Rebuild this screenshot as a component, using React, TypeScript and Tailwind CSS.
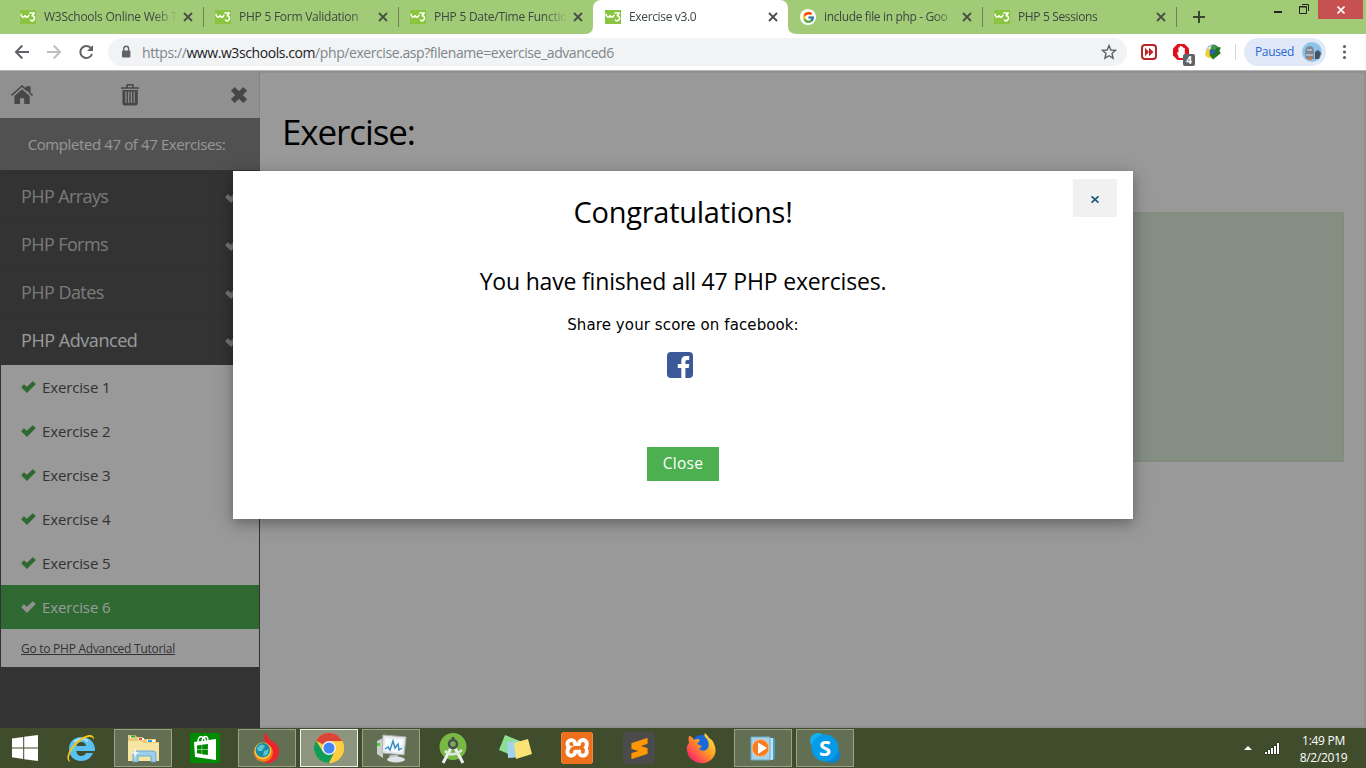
import React from "react";
import { FcGoogle } from "react-icons/fc";
import { SiSublimetext, SiXampp } from "react-icons/si";

const W3Icon = () => (
  <svg width="16" height="16" viewBox="0 0 16 16" className="shrink-0">
    <rect y="1" width="16" height="14" fill="#8ac53f" />
    <path d="M1 5.4 Q1.8 8.2 3.4 8.2 Q4.9 8.1 5 6.2 Q5.6 8.2 7 8.1 Q8.4 8 8.8 6.4" fill="none" stroke="#fff" strokeWidth="1.6" strokeLinecap="round" />
    <path d="M10 4 H14.3 L12.2 6.7 Q14.9 7.2 14.4 9.8 Q13.6 12.2 11.4 11.8 L10.5 11" fill="none" stroke="#fff" strokeWidth="1.6" strokeLinecap="round" strokeLinejoin="round" />
  </svg>
);

const CloseX = () => (
  <svg width="10" height="10" viewBox="0 0 10 10" className="shrink-0">
    <path d="M1 1 L9 9 M9 1 L1 9" stroke="#475044" strokeWidth="1.8" />
  </svg>
);

type TabProps = { title: string; spacing: string; google?: boolean; active?: boolean; line?: boolean; narrow?: boolean };

const Tab = ({ title, spacing, google, active, line, narrow }: TabProps) => (
  <div className={`relative flex h-[34px] shrink-0 items-center pl-3 ${narrow ? "w-[194px]" : "w-[195px]"} ${active ? "rounded-t-[8px] bg-white" : ""}`}>
    {active && (
      <svg className="absolute -left-2 bottom-0" width="212" height="8" viewBox="0 0 212 8">
        <path d="M0 8 Q8 8 8 0 V8 Z M212 8 Q203 8 203 0 V8 Z" fill="#fff" />
      </svg>
    )}
    {google ? (
      <span className="flex size-4 shrink-0 items-center justify-center rounded-full bg-white"><FcGoogle size={13} /></span>
    ) : (
      <W3Icon />
    )}
    <span className={`ml-2 w-[132px] shrink-0 text-[12px] leading-4 whitespace-nowrap text-[#3c4840] [mask-image:linear-gradient(to_right,black_110px,transparent_134px)] ${spacing}`}>{title}</span>
    <span className={`flex ${narrow ? "ml-[6px]" : "ml-[7px]"}`}><CloseX /></span>
    {line && <span className="absolute top-[7px] right-[-1px] h-5 w-px bg-[#6b8155]" />}
  </div>
);

const Check = ({ className }: { className: string }) => (
  <svg width="15" height="12" viewBox="0 0 15 12" className={`shrink-0 ${className}`}>
    <path d="M0.2 6.2 L2.9 3.3 L5.8 5.8 L11.9 0.2 L14.8 3 L6 11.9 Z" fill="currentColor" />
  </svg>
);

const sections = [
  { name: "PHP Arrays", cls: "text-[#ccc] tracking-[-0.6px]" },
  { name: "PHP Forms", cls: "text-[#ccc] tracking-[-0.6px]" },
  { name: "PHP Dates", cls: "text-[#ccc] tracking-[-0.55px]" },
  { name: "PHP Advanced", cls: "text-white tracking-[-0.45px]" },
];

const Sidebar = () => (
  <aside className="flex w-[260px] shrink-0 flex-col bg-[#555]">
    <div className="flex h-[47px] items-center justify-between border-r border-[#ddd] bg-[#f1f1f1] pr-[11px] pl-[11px] text-[#777]">
      <svg width="22" height="20" viewBox="0 0 22 20">
        <path d="M0.5 10.5 L11 1 L15.5 5 V2 H18.8 V8 L21.5 10.5" fill="none" stroke="currentColor" strokeWidth="1.6" />
        <path d="M16 2 H18.8 V8 L16 5.5 Z M11 4.2 L18.7 11 V19 H13.2 V13.2 H9 V19 H3.4 V11 Z" fill="currentColor" />
      </svg>
      <svg width="18" height="22" viewBox="0 0 18 22" className="mr-[3px]">
        <path d="M6 3.3 V1.5 Q6 .7 6.8 .7 H11.2 Q12 .7 12 1.5 V3.3 M0 4 H18" fill="none" stroke="currentColor" strokeWidth="1.6" />
        <path fillRule="evenodd" d="M1.4 6 H16.8 V19.3 Q16.8 21.5 14.6 21.5 H3.6 Q1.4 21.5 1.4 19.3 Z M4.4 7.5 V19 H5.6 V7.5 Z M7.1 7.5 V19 H8.3 V7.5 Z M9.8 7.5 V19 H11 V7.5 Z M12.6 7.5 V19 H13.8 V7.5 Z" fill="currentColor" />
      </svg>
      <svg width="18" height="18" viewBox="0 0 18 18">
        <path d="M2.8 2.8 L15.2 15.2 M15.2 2.8 L2.8 15.2" stroke="currentColor" strokeWidth="5.4" />
      </svg>
    </div>
    <div className="flex h-[52px] items-center justify-center bg-[#888] pr-[7px] text-[15px] tracking-[-0.39px] text-[#f8f8f8]">Completed 47 of 47 Exercises:</div>
    <div className="flex flex-col border-x border-[#555] pt-0.5">
      {sections.map((s) => (
        <div key={s.name} className={`flex h-12 items-center justify-between border-t border-[#4f4f4f] pr-[19px] pl-5 text-[18px] ${s.cls}`}>
          {s.name}
          <Check className="text-[#c4c4c4]" />
        </div>
      ))}
      <div className="mt-px flex flex-col bg-white text-[#555]">
        {[1, 2, 3, 4, 5, 6].map((n) => (
          <div key={n} className={`flex h-11 items-center gap-[6px] pl-5 text-[15px] tracking-[-0.14px] ${n === 6 ? "bg-[#4caf50] text-white" : "text-[#555]"}`}>
            <Check className={n === 6 ? "text-[#f1f1f1]" : "text-[#4caf50]"} />
            Exercise {n}
          </div>
        ))}
        <div className="flex h-[38px] items-center pt-0.5 pl-5 text-[12px] tracking-[-0.26px] underline">Go to PHP Advanced Tutorial</div>
      </div>
    </div>
  </aside>
);

const Modal = () => (
  <div className="absolute inset-0 flex items-start justify-center bg-black/40 pt-[100px]">
    <div className="relative flex h-[348px] w-[900px] flex-col items-center bg-white text-black shadow-[0_4px_10px_0_rgba(0,0,0,0.2),0_4px_20px_0_rgba(0,0,0,0.19)]">
      <button className="absolute top-2 right-4 flex h-[38px] w-11 items-center justify-center bg-[#f1f1f1] pt-[3px]">
        <svg width="8" height="7" viewBox="0 0 8 7"><path d="M.5 .3 L7.5 6.7 M7.5 .3 L.5 6.7" stroke="#17577c" strokeWidth="1.6" /></svg>
      </button>
      <h2 className="mt-[18px] h-[45px] text-[29px] leading-[45px] tracking-[-0.25px]">Congratulations!</h2>
      <h3 className="mt-[29px] h-9 text-[23px] leading-9 tracking-[-0.18px]">You have finished all 47 PHP exercises.</h3>
      <p className="mt-[15px] h-[23px] font-['DejaVu_Sans',sans-serif] text-[15px] leading-[23px] tracking-[0.1px]">Share your score on facebook:</p>
      <svg width="26" height="26" viewBox="0 0 26 26" className="mt-[15px] mr-[6px]">
        <rect width="26" height="26" rx="4" fill="#3b5998" />
        <path d="M14.3 26 V16 H10.8 V12 H14.3 V9 Q14.3 4 19 4 H22.2 V8 H20 Q18.4 8 18.4 9.6 V12 H22.3 L21.7 16 H18.4 V26 Z" fill="#fff" />
      </svg>
      <button className="mt-[69px] flex h-[34px] w-[72px] items-center justify-center bg-[#4caf50] text-[15.5px] tracking-[0.25px] text-white">Close</button>
    </div>
  </div>
);

const Toolbar = () => (
  <div className="flex h-9 items-center bg-white">
    <svg width="108" height="36" viewBox="0 0 108 36" fill="none" strokeWidth="2">
      <path d="M29 18 H16 M22.3 11.5 L16 18 L22.3 24.5" stroke="#5f6368" />
      <path d="M47 18 H60 M53.7 11.5 L60 18 L53.7 24.5" stroke="#bcbec0" />
      <path d="M91.2 14.5 A6 6 0 1 0 92 20" stroke="#5f6368" />
      <path d="M93 11 V17 H87 Z" fill="#5f6368" />
    </svg>
    <div className="flex h-7 w-[1019px] items-center rounded-full bg-[#f1f3f4] pr-2.5 pl-3">
      <svg width="12" height="14" viewBox="0 0 12 14"><rect x="2" y="5.5" width="8.4" height="7" rx="1" fill="#5f6368" /><path d="M3.8 6 V3.6 A2.4 2.4 0 0 1 8.6 3.6 V6" fill="none" stroke="#5f6368" strokeWidth="1.4" /></svg>
      <span className="ml-2.5 flex-1 text-[14px] tracking-[-0.42px] text-[#80868b]">https://<span className="text-[#202124]">www.w3schools.com</span>/php/exercise.asp?filename=exercise_advanced6</span>
      <svg width="16" height="16" viewBox="0 0 16 16"><path d="M8 1.6 L9.8 6 L14.6 6.4 L11 9.5 L12.1 14.2 L8 11.7 L3.9 14.2 L5 9.5 L1.4 6.4 L6.2 6 Z" fill="none" stroke="#5f6368" strokeWidth="1.4" /></svg>
    </div>
    <svg width="117" height="36" viewBox="1127 0 117 36">
      <rect x="1142" y="11" width="14" height="14" rx="3" fill="#fff" stroke="#b92327" strokeWidth="2" />
      <path d="M1145 13.8 L1149 18 L1145 22.2 Z M1149 13.8 L1153.5 18 L1149 22.2 Z" fill="#b92327" />
      <path d="M1177.5 10 H1184.5 L1189 14.5 V21.5 L1184.5 26 H1177.5 L1173 21.5 V14.5 Z" fill="#e0101c" />
      <path d="M1179 24 L1176.8 18.5 L1178.4 18.5 V13.5 H1179.8 V12 H1181.6 V12.8 H1183.2 V14 H1184.8 V21 L1183 24 Z" fill="#fff" />
      <rect x="1183" y="20" width="12" height="12" rx="2" fill="#5f6368" />
      <text x="1189" y="30" textAnchor="middle" fontSize="10" fontWeight="700" fill="#fff">4</text>
      <circle cx="1213" cy="17" r="6.5" fill="#2a5fae" />
      <path d="M1207 15 Q1209 11 1213 11 L1211 15 L1207 18 Z" fill="#d5e4f0" />
      <path d="M1211 12 Q1215 10 1218 13 L1215 16 L1211 15 Z" fill="#3c9c35" />
      <path d="M1205 20 Q1206 15 1211 14 Q1208 18 1211 21 L1214 24 Q1206 25 1205 20 Z" fill="#f0cf2e" />
      <path d="M1217 13 L1221 13.5 L1219 17 L1221 19 L1213 25.5 L1209 20 L1213 20.5 L1215 18 Z" fill="#23761f" />
      <path d="M1235.5 10 V26" stroke="#d3d6da" />
    </svg>
    <div className="flex h-7 w-[82px] items-center justify-between rounded-full bg-[#e1e9f8] pr-1 pl-[11px] text-[12px] tracking-[-0.35px] text-[#2668d0]">
      Paused
      <svg width="20" height="20" viewBox="0 0 20 20"><circle cx="10" cy="10" r="10" fill="#8cc4ec" /><path d="M3 11 Q3 4 8 4 Q12 4 12 10 V17 H4 Z" fill="#7d8795" /><path d="M5 8 H10 M4 13 H11" stroke="#c2c8cf" strokeWidth="1.4" /><path d="M6 15 H10 V18 H6 Z" fill="#c97b4e" /><path d="M13 10 L16 8 L19 11 L17 17 H13 Z" fill="#46525f" /></svg>
    </div>
    <svg width="36" height="36" viewBox="0 0 36 36" fill="#5f6368"><circle cx="18.5" cy="12.5" r="1.6" /><circle cx="18.5" cy="18" r="1.6" /><circle cx="18.5" cy="23.5" r="1.6" /></svg>
  </div>
);

const IEIcon = () => (
  <svg width="32" height="32" viewBox="0 0 32 32">
    <path fillRule="evenodd" d="M16 5 C9 5 4 10 4 17 C4 24 9 29 16 29 C22 29 26 26 28 21 H21 C20 23 18.5 24 16.3 24 C13.5 24 11.5 22 11.3 19 H30 C30.5 11 25 5 16 5 Z M11.5 14 C12 11.5 13.8 10 16.3 10 C19 10 20.7 11.5 21 14 Z" fill="#5bc0f2" />
    <path d="M9 10 Q15 4 23 9" stroke="#b8eaff" strokeWidth="1.5" fill="none" />
    <path d="M29 8 C30 0 20 2 11 10 C3 18 -1 29 6 30 C2 28 4 20 12 12 C20 4 28 3 29 8 Z" fill="#f6c51c" />
  </svg>
);
const ExplorerIcon = () => (
  <svg width="34" height="32" viewBox="0 0 34 32">
    <path d="M2 3 H9 L11 5 H16 L18 7 H30 V10 H33 V29 H2 Z" fill="#e9ca78" />
    <path d="M4 4 H9 V6 H4 Z" fill="#fff" /><rect x="5" y="3.5" width="4" height="2" fill="#29a83c" />
    <path d="M12 6 H18 V8 H12 Z M21 8 H29 V10 H21 Z" fill="#fff" /><rect x="13" y="6" width="3" height="2" fill="#e44" /><rect x="22" y="8" width="4" height="2" fill="#28a4d8" />
    <path d="M2 9 H15 L18 11 H33 V29 H2 Z" fill="#f7e5a4" />
    <path d="M7 30 V22 Q7 19 10 19 H27 Q30 19 30 22 V30 H25 V24 H12 V30 Z" fill="#9bcfec" stroke="#5d9fc9" strokeWidth=".8" />
    <path d="M9 15 L10 20 L14 21 L10 22 L9 27 L8 22 L5 21 L8 20 Z" fill="#fff" opacity=".85" />
  </svg>
);
const WinPane = ({ color }: { color: string }) => (
  <path d="M0 3.6 L11.2 2 V12.4 H0 Z M12.2 1.8 L26 0 V12.4 H12.2 Z M0 13.4 H11.2 V24 L0 22.2 Z M12.2 13.4 H26 V26 L12.2 24.2 Z" fill={color} />
);
const StoreIcon = () => (
  <svg width="30" height="30" viewBox="0 0 30 30"><rect width="30" height="30" fill="#008a00" /><path d="M4 9 L26 6 V27 L5 24 Z" fill="#fff" /><path d="M8 9 Q8 3 12 4 Q16 5 15 9 M12 8 Q13 2 17 4 Q18 5 18 8" fill="none" stroke="#fff" strokeWidth="1.5" /><g transform="translate(7 11) scale(.42)"><WinPane color="#008a00" /></g></svg>
);
const TorchIcon = () => (
  <svg width="28" height="34" viewBox="0 0 28 34"><path d="M13 1 Q9 6 13 11 L18 18 L8 29 Q12 33 17 32 Q26 29 26 20 Q26 14 19 10 Q13 6 13 1 Z" fill="#ed242c" /><circle cx="10.5" cy="21.5" r="9.5" fill="#ee7d1b" /><circle cx="9.8" cy="20" r="8.5" fill="#ffc33a" /><circle cx="9.8" cy="19.2" r="7.2" fill="#1788a5" /><path d="M4 17 Q8 11 12 15 L9 20 L5 20 Z M11 20 L16 18 L14 24 L10 25 Z" fill="#59c5cd" /></svg>
);
const ChromeIcon = () => (
  <svg width="30" height="30" viewBox="0 0 30 30"><circle cx="15" cy="15" r="15" fill="#fc4" /><path d="M15 15 L2 7.5 A15 15 0 0 1 28 7.5 L27.9 8.2 H15 Z" fill="#db4437" /><path d="M2 7.5 A15 15 0 0 0 15 30 L21 18.5 L15 15 L8.5 18 Z" fill="#0f9d58" /><path d="M15 8.2 H28.4 A15 15 0 0 1 15 30 L21 18.4 Z" fill="#ffcd42" /><circle cx="15" cy="15" r="7" fill="#f1f1f1" /><circle cx="15" cy="15" r="5.5" fill="#4285f4" /></svg>
);
const MonitorIcon = () => (
  <svg width="32" height="30" viewBox="0 0 32 30"><path d="M2 8 L8 5 V25 L2 21 Z" fill="#ccd0cd" /><path d="M2 10 H5 V13 H2 Z" fill="#47d32f" /><path d="M8 2 L31 4 L29 22 L7 20 Z" fill="#e6e8e9" stroke="#aab0b2" /><path d="M10 5 L28 6.5 L26.5 19.5 L9.5 18 Z" fill="#f5fbff" /><path d="M10 16 L13 14 L15 17 L18 8 L20 15 L23 11 L24 17 L27 15" fill="none" stroke="#378fc3" strokeWidth="1.5" /><path d="M15 22 H23 L24 26 H13 Z" fill="#b9bfc2" /><ellipse cx="21" cy="26.5" rx="9" ry="3" fill="#dfe2e3" /></svg>
);
const StudioIcon = () => (
  <svg width="28" height="32" viewBox="0 0 28 32"><circle cx="14" cy="14.5" r="13.5" fill="#78b943" /><path d="M12 16 L4 31 M16 16 L24 31" stroke="#eceff0" strokeWidth="3" /><path d="M6 19 Q13 26 23 18" fill="none" stroke="#e2e6e5" strokeWidth="2.5" /><circle cx="14" cy="12" r="4" fill="#7fa958" stroke="#47524c" strokeWidth="2.6" /><path d="M14 5 V9" stroke="#47524c" strokeWidth="3" /></svg>
);
const NotesIcon = () => (
  <svg width="34" height="28" viewBox="0 0 34 28"><path d="M7 1 L22 7 L16 22 L1 16 Z" fill="#8bdf8e" /><path d="M9 8 L24 7 L24 23 L10 24 Z" fill="#a2d2ed" /><path d="M16 9 L30 5 L34 20 L18 25 Z" fill="#fbe275" /></svg>
);
const FirefoxIcon = () => (
  <svg width="32" height="32" viewBox="0 0 32 32">
    <defs><linearGradient id="fire" x1="1" y1="0" x2="0" y2="1"><stop offset="0" stopColor="#fff34f" /><stop offset=".45" stopColor="#ff9b20" /><stop offset=".8" stopColor="#ff365d" /><stop offset="1" stopColor="#e81b7b" /></linearGradient></defs>
    <circle cx="17" cy="14" r="11" fill="#1768dc" /><path d="M4 4 Q7 4 9 8 Q13 6 15 8 L12 12 L17 14 L14 17 Q17 20 21 18 Q26 14 22 7 Q18 4 20 1 Q23 4 24 6 Q28 8 29 12 Q33 20 27 27 Q22 32 15 31 Q4 29 2 19 Q1 14 4 11 Q3 7 4 4 Z" fill="url(#fire)" />
  </svg>
);
const MediaIcon = () => (
  <svg width="30" height="28" viewBox="0 0 30 28"><path d="M5 4 H27 V25 H5 Z" fill="#429fcb" /><path d="M5 4 H25 V26 H5 Z" fill="#c0e2f1" /><path d="M3 3 H22 V26 H3 Z" fill="#a6d2e8" stroke="#68aacc" /><circle cx="12.5" cy="14" r="8.5" fill="#f57d22" stroke="#f9bd8b" /><path d="M10 8.5 L19 14 L10 20 Z" fill="#fff" /></svg>
);
const SkypeIcon = () => (
  <svg width="30" height="30" viewBox="0 0 30 30"><circle cx="8" cy="8" r="8" fill="#12b2f2" /><circle cx="22" cy="22" r="8" fill="#0683db" /><circle cx="15" cy="15" r="13.5" fill="#079ae7" /><text x="15" y="22.5" textAnchor="middle" fontSize="22" fontWeight="700" fill="#fff">S</text></svg>
);

const taskItems = [
  { icon: <IEIcon />, tile: "" },
  { icon: <ExplorerIcon />, tile: "border border-[#99a18a] bg-[#626f53]" },
  { icon: <StoreIcon />, tile: "" },
  { icon: <TorchIcon />, tile: "border border-[#99a18a] bg-[#626f53]" },
  { icon: <ChromeIcon />, tile: "border border-[#eff1ec] bg-[#8d957f]" },
  { icon: <MonitorIcon />, tile: "border border-[#99a18a] bg-[#626f53]" },
  { icon: <StudioIcon />, tile: "" },
  { icon: <NotesIcon />, tile: "" },
  { icon: <span className="flex size-8 items-center justify-center rounded bg-white"><SiXampp size={32} color="#ee701d" /></span>, tile: "" },
  { icon: <span className="flex size-8 items-center justify-center rounded-sm bg-[#4b4b4b]"><SiSublimetext size={21} color="#ff9800" /></span>, tile: "" },
  { icon: <FirefoxIcon />, tile: "" },
  { icon: <MediaIcon />, tile: "border border-[#99a18a] bg-[#626f53]" },
  { icon: <SkypeIcon />, tile: "border border-[#99a18a] bg-[#626f53]" },
];

const Taskbar = () => (
  <div className="flex h-10 items-center bg-[#3f4d2d] text-white">
    <div className="flex w-[50px] shrink-0 pl-3"><svg width="26" height="26" viewBox="0 0 26 26"><WinPane color="#fff" /></svg></div>
    {taskItems.map((t, i) => (
      <div key={i} className="flex w-[62px] shrink-0 justify-center">
        <div className={`flex h-[38px] w-[58px] items-center justify-center ${t.tile}`}>{t.icon}</div>
      </div>
    ))}
    <div className="ml-auto flex items-center pt-0.5">
      <svg width="38" height="16" viewBox="0 0 38 16">
        <path d="M1 9 L5 5 L9 9 Z" fill="#fff" />
        <path d="M22 13 V11 H24 V13 Z M25 13 V9 H27 V13 Z M28 13 V7 H30 V13 Z M31 13 V5 H33 V13 Z M34 13 V2 H36 V13 Z" fill="#fff" stroke="#222a18" strokeWidth="1" paintOrder="stroke" />
      </svg>
      <div className="flex w-[85px] flex-col items-center text-[12px] leading-[17px] tracking-[-0.3px]"><span>1:49 PM</span><span>8/2/2019</span></div>
    </div>
  </div>
);

export default function App() {
  return (
    <div className="flex h-[768px] w-[1366px] flex-col overflow-hidden bg-[#999] font-['Open_Sans','Noto_Sans',sans-serif]">
      <div className="flex h-[34px] items-start bg-[#a2cb77] pl-2">
        <Tab title="W3Schools Online Web T" spacing="tracking-[-0.25px]" line />
        <Tab title="PHP 5 Form Validation" spacing="tracking-[-0.25px]" line />
        <Tab title="PHP 5 Date/Time Functio" spacing="tracking-[-0.25px]" />
        <Tab title="Exercise v3.0" spacing="tracking-[-0.35px]" active />
        <Tab title="include file in php - Goo" spacing="tracking-[-0.36px]" google line narrow />
        <Tab title="PHP 5 Sessions" spacing="tracking-[-0.36px]" line narrow />
        <svg width="142" height="34" viewBox="1176 0 142 34" fill="none" className="shrink-0">
          <path d="M1193 17 H1205 M1199 11 V23" stroke="#39462f" strokeWidth="2" />
          <path d="M1274 12 H1282" stroke="#222" strokeWidth="2" />
          <path d="M1299.5 6.5 H1306.5 V13.5 H1299.5 Z M1302 4.5 H1308.5 V11" stroke="#222" />
          <path d="M1299 7 H1307" stroke="#222" />
        </svg>
        <div className="flex h-[19px] w-[45px] items-center justify-center bg-[#c75050]"><svg width="8" height="8" viewBox="0 0 8 8"><path d="M.5 .5 L7.5 7.5 M7.5 .5 L.5 7.5" stroke="#fff" strokeWidth="1.6" /></svg></div>
      </div>
      <Toolbar />
      <div className="h-px bg-[#b5b5b5]" />
      <div className="relative flex h-[657px]">
        <Sidebar />
        <main className="flex flex-1 flex-col border-y-2 border-r-2 border-[#f1f1f1] bg-white pr-5 pl-[22px] text-black">
          <h1 className="mt-[32px] h-[54px] text-[35px] leading-[54px] tracking-[-1.1px]">Exercise:</h1>
          <div className="mt-[53px] h-[250px] border border-[#d6e9c6] bg-[#dcedda]" />
        </main>
        <Modal />
      </div>
      <Taskbar />
    </div>
  );
}
